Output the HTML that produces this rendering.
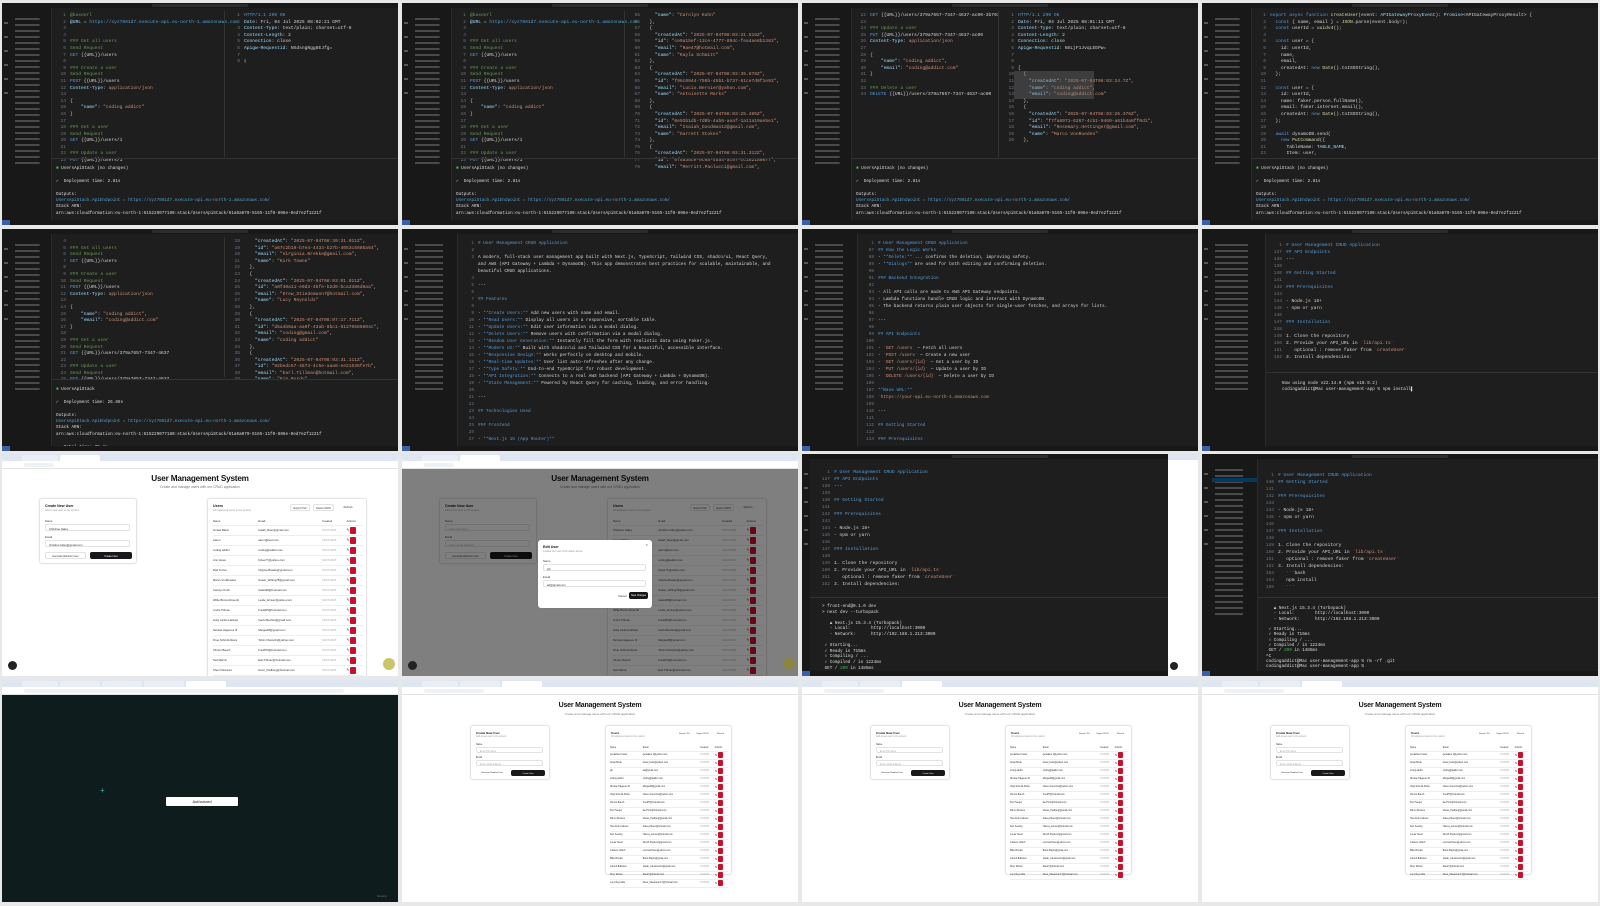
<!DOCTYPE html>
<html><head><meta charset="utf-8">
<style>
*{margin:0;padding:0;box-sizing:border-box}
body{width:1600px;height:906px;background:#e8e8e8;position:relative;overflow:hidden;font-family:"Liberation Sans",sans-serif}
.c{position:absolute;width:396px;height:222px;overflow:hidden;background:#1e1e1e}
.a{position:absolute}
.tb{position:absolute;left:0;top:0;width:396px;height:5px;background:#181818}
.tb:after{content:"";position:absolute;left:150px;top:1px;width:96px;height:3px;background:#2c2c2c;border-radius:1px}
.st{position:absolute;left:0;bottom:0;width:396px;height:5px;background:#181818;border-left:8px solid #3a5fa8}
.act{position:absolute;left:0;top:5px;width:8px;height:212px;background:#181818;background-image:repeating-linear-gradient(180deg,transparent 0 8px,#555 8px 10px,transparent 10px 14px);background-size:4px 80px;background-repeat:no-repeat;background-position:2px 6px}
.sd{position:absolute;left:8px;top:5px;height:212px;background:#181818;border-right:1px solid #2a2a2a;background-image:repeating-linear-gradient(180deg,transparent 0 2px,#4a4a4a 2px 4px,transparent 4px 6px);background-size:60% 150px;background-repeat:no-repeat;background-position:5px 8px}
.code{position:absolute;font-family:"Liberation Mono",monospace;font-size:4.6px;line-height:6.6px;color:#d4d4d4;white-space:pre}
.n{color:#6e7681;display:inline-block;width:12px;text-align:right;margin-right:4px}
.s{color:#ce9178}.k{color:#9cdcfe}.b{color:#569cd6}.g{color:#6a9955}.y{color:#dcdcaa}.gr{color:#3fb950}.u{color:#4fa3d6}
.hr{position:absolute;height:1px;background:#333}
.term{position:absolute;font-family:"Liberation Mono",monospace;font-size:4.3px;line-height:6.4px;color:#ddd;white-space:pre}
.w{background:#fff}
.tabs{position:absolute;left:0;top:0;width:396px;height:7px;background:#dfe6f3}
.tab{position:absolute;top:1px;height:6px;background:#fff;border-radius:2px 2px 0 0}
.addr{position:absolute;left:0;top:7px;width:396px;height:8px;background:#fff;border-bottom:0.5px solid #e3e3e3}
.addr i{position:absolute;left:22px;top:2px;height:4px;background:#eef1f6;border-radius:2px}
.h1{position:absolute;width:396px;text-align:center;font-weight:bold;font-size:8.2px;color:#111;letter-spacing:-0.2px}
.sub{position:absolute;width:396px;text-align:center;font-size:3.4px;color:#777}
.card{position:absolute;background:#fff;border:0.5px solid #e4e4e4;border-radius:3px;box-shadow:0 0 2px rgba(0,0,0,.07);font-size:2.8px;color:#333}
.card .ct{position:absolute;left:5px;top:5px;font-weight:bold;font-size:3.6px;color:#111}
.card .cs{position:absolute;left:5px;top:10px;font-size:2.6px;color:#999}
.lab{position:absolute;left:5px}
.inp{position:absolute;left:5px;right:6px;height:7px;border:0.5px solid #e2e2e2;border-radius:2px;padding:1.6px 3px;font-size:2.8px}
.btn{position:absolute;height:7px;border:0.5px solid #e2e2e2;border-radius:2px;font-size:2.5px;text-align:center;padding-top:2px;white-space:nowrap}
.dk{background:#18181b;color:#fff;border-color:#18181b}
table{position:absolute;border-collapse:collapse;font-size:2.8px;color:#333}
td,th{text-align:left;font-weight:normal;border-bottom:0.5px solid #eee;white-space:nowrap;padding:0}
td.d{color:#aaa}
.ed{display:inline-block;font-size:3.5px;color:#222;margin-right:1px}
.del{display:inline-block;background:#c8102e;border-radius:1px;vertical-align:middle}
</style></head><body>

<!-- ROW 1 -->
<div class="c" style="left:2px;top:3px">
<div class="tb"></div><div class="act"></div><div class="sd" style="width:42px"></div>
<div class="code" style="left:52px;top:10px"><span class="n">1</span><span class="g">@baseUrl</span>
<span class="n">2</span><span class="k">@URL</span> = <span class="u">https://xyz7861d7.execute-api.eu-north-1.amazonaws.com</span>
<span class="n">3</span>
<span class="n">4</span>
<span class="n">5</span><span class="g">### Get all users</span>
<span class="n">6</span><span class="g">Send Request</span>
<span class="n">7</span><span class="b">GET</span> {{URL}}/users
<span class="n">8</span>
<span class="n">9</span><span class="g">### Create a user</span>
<span class="n">10</span><span class="g">Send Request</span>
<span class="n">11</span><span class="b">POST</span> {{URL}}/users
<span class="n">12</span><span class="k">Content-Type</span>: <span class="s">application/json</span>
<span class="n">13</span>
<span class="n">14</span>{
<span class="n">15</span>    <span class="k">"name"</span>: <span class="s">"coding addict"</span>
<span class="n">16</span>}
<span class="n">17</span>
<span class="n">18</span><span class="g">### Get a user</span>
<span class="n">19</span><span class="g">Send Request</span>
<span class="n">20</span><span class="b">GET</span> {{URL}}/users/1
<span class="n">21</span>
<span class="n">22</span><span class="g">### Update a user</span>
<span class="n">23</span><span class="b">PUT</span> {{URL}}/users/1</div>
<div class="hr" style="left:222px;top:8px;width:1px;height:146px"></div>
<div class="code" style="left:226px;top:10px"><span class="n">1</span><span class="b">HTTP/1.1 200 OK</span>
<span class="n">2</span><span class="k">Date</span>: Fri, 04 Jul 2025 08:02:21 GMT
<span class="n">3</span><span class="k">Content-Type</span>: text/plain; charset=utf-8
<span class="n">4</span><span class="k">Content-Length</span>: 2
<span class="n">5</span><span class="k">Connection</span>: close
<span class="n">6</span><span class="k">Apigw-Requestid</span>: NXdsngNgg8EJfg=
<span class="n">7</span>
<span class="n">8</span>▯</div>
<div class="hr" style="left:50px;top:155px;width:346px"></div>
<div class="term" style="left:54px;top:163px"><span class="gr">■</span> UsersApiStack (no changes)

✓  Deployment time: 2.81s

Outputs:
<span class="u">UsersApiStack.ApiEndpoint = https://xyz7861d7.execute-api.eu-north-1.amazonaws.com/</span>
Stack ARN:
arn:aws:cloudformation:eu-north-1:615229077180:stack/UsersApiStack/61a0a070-5165-11f0-806e-0ed7e2f1221f

✓  Total time: 4.30s

codingaddict@Mac users-api % ▯</div>
<div class="st"></div></div>

<div class="c" style="left:402px;top:3px">
<div class="tb"></div><div class="act"></div><div class="sd" style="width:42px"></div>
<div class="code" style="left:52px;top:10px"><span class="n">1</span><span class="g">@baseUrl</span>
<span class="n">2</span><span class="k">@URL</span> = <span class="u">https://xyz7861d7.execute-api.eu-north-1.amazonaws.com</span>
<span class="n">3</span>
<span class="n">4</span>
<span class="n">5</span><span class="g">### Get all users</span>
<span class="n">6</span><span class="g">Send Request</span>
<span class="n">7</span><span class="b">GET</span> {{URL}}/users
<span class="n">8</span>
<span class="n">9</span><span class="g">### Create a user</span>
<span class="n">10</span><span class="g">Send Request</span>
<span class="n">11</span><span class="b">POST</span> {{URL}}/users
<span class="n">12</span><span class="k">Content-Type</span>: <span class="s">application/json</span>
<span class="n">13</span>
<span class="n">14</span>{
<span class="n">15</span>    <span class="k">"name"</span>: <span class="s">"coding addict"</span>
<span class="n">16</span>}
<span class="n">17</span>
<span class="n">18</span><span class="g">### Get a user</span>
<span class="n">19</span><span class="g">Send Request</span>
<span class="n">20</span><span class="b">GET</span> {{URL}}/users/1
<span class="n">21</span>
<span class="n">22</span><span class="g">### Update a user</span>
<span class="n">23</span><span class="b">PUT</span> {{URL}}/users/1</div>
<div class="hr" style="left:222px;top:8px;width:1px;height:146px"></div>
<div class="code" style="left:226px;top:10px"><span class="n">55</span>    <span class="k">"name"</span>: <span class="s">"Carolyn Kuhn"</span>
<span class="n">56</span>  },
<span class="n">57</span>  {
<span class="n">58</span>    <span class="k">"createdAt"</span>: <span class="s">"2025-07-04T08:03:31.516Z"</span>,
<span class="n">59</span>    <span class="k">"id"</span>: <span class="s">"ce9a15ef-13ce-4777-894c-fea4ae8b1383"</span>,
<span class="n">60</span>    <span class="k">"email"</span>: <span class="s">"Rae47@hotmail.com"</span>,
<span class="n">61</span>    <span class="k">"name"</span>: <span class="s">"Kayla Schmitt"</span>
<span class="n">62</span>  },
<span class="n">63</span>  {
<span class="n">64</span>    <span class="k">"createdAt"</span>: <span class="s">"2025-07-04T08:03:35.678Z"</span>,
<span class="n">65</span>    <span class="k">"id"</span>: <span class="s">"f96c0944-705b-45b1-b737-61ce7d0f1e93"</span>,
<span class="n">66</span>    <span class="k">"email"</span>: <span class="s">"Lucio.Bernier@yahoo.com"</span>,
<span class="n">67</span>    <span class="k">"name"</span>: <span class="s">"Antoinette Marks"</span>
<span class="n">68</span>  },
<span class="n">69</span>  {
<span class="n">70</span>    <span class="k">"createdAt"</span>: <span class="s">"2025-07-04T08:03:25.495Z"</span>,
<span class="n">71</span>    <span class="k">"id"</span>: <span class="s">"0e93b1db-7d0b-4ab6-aeaf-1a11a19ae5e1"</span>,
<span class="n">72</span>    <span class="k">"email"</span>: <span class="s">"Isaiah_Goodman12@gmail.com"</span>,
<span class="n">73</span>    <span class="k">"name"</span>: <span class="s">"Garrett Stokes"</span>
<span class="n">74</span>  },
<span class="n">75</span>  {
<span class="n">76</span>    <span class="k">"createdAt"</span>: <span class="s">"2025-07-04T08:03:31.312Z"</span>,
<span class="n">77</span>    <span class="k">"id"</span>: <span class="s">"0f5a35ce-0c0a-45a4-ac97-cc1621a0877"</span>,
<span class="n">78</span>    <span class="k">"email"</span>: <span class="s">"Merritt.Paolucci@gmail.com"</span>,</div>
<div class="hr" style="left:50px;top:155px;width:346px"></div>
<div class="term" style="left:54px;top:163px"><span class="gr">■</span> UsersApiStack (no changes)

✓  Deployment time: 2.81s

Outputs:
<span class="u">UsersApiStack.ApiEndpoint = https://xyz7861d7.execute-api.eu-north-1.amazonaws.com/</span>
Stack ARN:
arn:aws:cloudformation:eu-north-1:615229077180:stack/UsersApiStack/61a0a070-5165-11f0-806e-0ed7e2f1221f

✓  Total time: 4.30s

codingaddict@Mac users-api % ▯</div>
<div class="st"></div></div>

<div class="c" style="left:802px;top:3px">
<div class="tb"></div><div class="act"></div><div class="sd" style="width:42px"></div>
<div class="code" style="left:52px;top:10px"><span class="n">22</span><span class="b">GET</span> {{URL}}/users/379a7657-7347-4637-ac00-3b70393c5c36
<span class="n">23</span>
<span class="n">24</span><span class="g">### Update a user</span>
<span class="n">25</span><span class="b">PUT</span> {{URL}}/users/379a7657-7347-4637-ac00
<span class="n">26</span><span class="k">Content-Type</span>: <span class="s">application/json</span>
<span class="n">27</span>
<span class="n">28</span>{
<span class="n">29</span>    <span class="k">"name"</span>: <span class="s">"coding addict"</span>,
<span class="n">30</span>    <span class="k">"email"</span>: <span class="s">"coding@addict.com"</span>
<span class="n">31</span>}
<span class="n">32</span>
<span class="n">33</span><span class="g">### Delete a user</span>
<span class="n">34</span><span class="b">DELETE</span> {{URL}}/users/379a7657-7347-4637-ac00</div>
<div class="hr" style="left:196px;top:8px;width:1px;height:146px"></div>
<div class="a" style="left:197px;top:8px;width:199px;height:146px;background:#1e1e1e"></div>
<div class="code" style="left:200px;top:10px"><span class="n">1</span><span class="b">HTTP/1.1 200 OK</span>
<span class="n">2</span><span class="k">Date</span>: Fri, 04 Jul 2025 08:01:11 GMT
<span class="n">3</span><span class="k">Content-Type</span>: text/plain; charset=utf-8
<span class="n">4</span><span class="k">Content-Length</span>: 2
<span class="n">5</span><span class="k">Connection</span>: close
<span class="n">6</span><span class="k">Apigw-Requestid</span>: NXLjF1JvqLEEPw=
<span class="n">7</span>
<span class="n">8</span>
<span class="n">9</span>[
<span class="n">10</span>  {
<span class="n">11</span>    <span class="k">"createdAt"</span>: <span class="s">"2025-07-04T08:03:24.7Z"</span>,
<span class="n">12</span>    <span class="k">"name"</span>: <span class="s">"coding addict"</span>,
<span class="n">13</span>    <span class="k">"email"</span>: <span class="s">"coding@addict.com"</span>
<span class="n">14</span>  },
<span class="n">15</span>  {
<span class="n">16</span>    <span class="k">"createdAt"</span>: <span class="s">"2025-07-04T08:03:26.376Z"</span>,
<span class="n">17</span>    <span class="k">"id"</span>: <span class="s">"f7fa8971-6267-4cb1-9469-a61b4a8ff0d1"</span>,
<span class="n">18</span>    <span class="k">"email"</span>: <span class="s">"Rosemary.Hettinger@gmail.com"</span>,
<span class="n">19</span>    <span class="k">"name"</span>: <span class="s">"Marco VonRueden"</span>
<span class="n">20</span>  },</div>
<div class="a" style="left:212px;top:68px;width:80px;height:28px;background:rgba(120,120,120,.35)"></div>
<div class="hr" style="left:50px;top:155px;width:346px"></div>
<div class="term" style="left:54px;top:163px"><span class="gr">■</span> UsersApiStack (no changes)

✓  Deployment time: 2.81s

Outputs:
<span class="u">UsersApiStack.ApiEndpoint = https://xyz7861d7.execute-api.eu-north-1.amazonaws.com/</span>
Stack ARN:
arn:aws:cloudformation:eu-north-1:615229077180:stack/UsersApiStack/61a0a070-5165-11f0-806e-0ed7e2f1221f

✓  Total time: 4.30s

codingaddict@Mac users-api % ▯</div>
<div class="st"></div></div>

<div class="c" style="left:1202px;top:3px">
<div class="tb"></div><div class="act"></div><div class="sd" style="width:42px"></div>
<div class="code" style="left:52px;top:10px"><span class="n">1</span><span class="b">export async function</span> <span class="y">createUser</span>(event: <span class="k">APIGatewayProxyEvent</span>): <span class="k">Promise</span>&lt;APIGatewayProxyResult&gt; {
<span class="n">2</span>  <span class="b">const</span> { name, email } = <span class="y">JSON</span>.parse(event.body!);
<span class="n">3</span>  <span class="b">const</span> userId = <span class="y">uuidv4</span>();
<span class="n">4</span>
<span class="n">5</span>  <span class="b">const</span> user = {
<span class="n">6</span>    id: userId,
<span class="n">7</span>    name,
<span class="n">8</span>    email,
<span class="n">9</span>    createdAt: <span class="b">new</span> <span class="y">Date</span>().toISOString(),
<span class="n">10</span>  };
<span class="n">11</span>
<span class="n">12</span>  <span class="b">const</span> user = {
<span class="n">13</span>    id: userId,
<span class="n">14</span>    name: faker.person.fullName(),
<span class="n">15</span>    email: faker.internet.email(),
<span class="n">16</span>    createdAt: <span class="b">new</span> <span class="y">Date</span>().toISOString(),
<span class="n">17</span>  };
<span class="n">18</span>
<span class="n">19</span>  <span class="b">await</span> dynamoDB.send(
<span class="n">20</span>    <span class="b">new</span> <span class="y">PutCommand</span>({
<span class="n">21</span>      TableName: <span class="k">TABLE_NAME</span>,
<span class="n">22</span>      Item: user,</div>
<div class="hr" style="left:50px;top:155px;width:346px"></div>
<div class="term" style="left:54px;top:163px"><span class="gr">■</span> UsersApiStack (no changes)

✓  Deployment time: 2.81s

Outputs:
<span class="u">UsersApiStack.ApiEndpoint = https://xyz7861d7.execute-api.eu-north-1.amazonaws.com/</span>
Stack ARN:
arn:aws:cloudformation:eu-north-1:615229077180:stack/UsersApiStack/61a0a070-5165-11f0-806e-0ed7e2f1221f

✓  Total time: 4.30s

codingaddict@Mac users-api % ▯</div>
<div class="st"></div></div>

<!-- ROW 2 -->
<div class="c" style="left:2px;top:229px">
<div class="tb"></div><div class="act"></div><div class="sd" style="width:42px"></div>
<div class="code" style="left:52px;top:10px"><span class="n">4</span>
<span class="n">5</span><span class="g">### Get all users</span>
<span class="n">6</span><span class="g">Send Request</span>
<span class="n">7</span><span class="b">GET</span> {{URL}}/users
<span class="n">8</span>
<span class="n">9</span><span class="g">### Create a user</span>
<span class="n">10</span><span class="g">Send Request</span>
<span class="n">11</span><span class="b">POST</span> {{URL}}/users
<span class="n">12</span><span class="k">Content-Type</span>: <span class="s">application/json</span>
<span class="n">13</span>
<span class="n">14</span>{
<span class="n">15</span>    <span class="k">"name"</span>: <span class="s">"coding addict"</span>,
<span class="n">16</span>    <span class="k">"email"</span>: <span class="s">"coding@addict.com"</span>
<span class="n">17</span>}
<span class="n">18</span>
<span class="n">19</span><span class="g">### Get a user</span>
<span class="n">20</span><span class="g">Send Request</span>
<span class="n">21</span><span class="b">GET</span> {{URL}}/users/379a7657-7347-4637
<span class="n">22</span>
<span class="n">23</span><span class="g">### Update a user</span>
<span class="n">24</span><span class="g">Send Request</span>
<span class="n">25</span><span class="b">PUT</span> {{URL}}/users/379a7657-7347-4637
<span class="n">26</span><span class="k">Content-Type</span>: <span class="s">application/json</span></div>
<div class="a" style="left:223px;top:8px;width:173px;height:142px;background:#1e1e1e"></div>
<div class="hr" style="left:222px;top:8px;width:1px;height:140px"></div>
<div class="code" style="left:226px;top:10px"><span class="n">18</span>    <span class="k">"createdAt"</span>: <span class="s">"2025-07-04T08:30:31.011Z"</span>,
<span class="n">19</span>    <span class="k">"id"</span>: <span class="s">"a67c2b19-b7e4-4433-b27b-4053c5986a64"</span>,
<span class="n">20</span>    <span class="k">"email"</span>: <span class="s">"Virginia.Brekke@gmail.com"</span>,
<span class="n">21</span>    <span class="k">"name"</span>: <span class="s">"Kirk Towne"</span>
<span class="n">22</span>  },
<span class="n">23</span>  {
<span class="n">24</span>    <span class="k">"createdAt"</span>: <span class="s">"2025-07-04T08:03:01.011Z"</span>,
<span class="n">25</span>    <span class="k">"id"</span>: <span class="s">"a0f40a11-e0d3-4bfe-b2d0-bca3386d8aa"</span>,
<span class="n">26</span>    <span class="k">"email"</span>: <span class="s">"Drew_Stiedemann7@hotmail.com"</span>,
<span class="n">27</span>    <span class="k">"name"</span>: <span class="s">"Lucy Reynolds"</span>
<span class="n">28</span>  },
<span class="n">29</span>  {
<span class="n">30</span>    <span class="k">"createdAt"</span>: <span class="s">"2025-07-04T08:07:17.711Z"</span>,
<span class="n">31</span>    <span class="k">"id"</span>: <span class="s">"d5a4b6aa-aa0f-43ab-8bc1-61270585604c"</span>,
<span class="n">32</span>    <span class="k">"email"</span>: <span class="s">"coding@gmail.com"</span>,
<span class="n">33</span>    <span class="k">"name"</span>: <span class="s">"coding addict"</span>
<span class="n">34</span>  },
<span class="n">35</span>  {
<span class="n">36</span>    <span class="k">"createdAt"</span>: <span class="s">"2025-07-04T08:03:31.111Z"</span>,
<span class="n">37</span>    <span class="k">"id"</span>: <span class="s">"92bedc57-4873-4c5e-aaa6-ee21536fe7b"</span>,
<span class="n">38</span>    <span class="k">"email"</span>: <span class="s">"Earl.Tillman@hotmail.com"</span>,
<span class="n">39</span>    <span class="k">"name"</span>: <span class="s">"Kip Purdy"</span>
<span class="n">40</span>  },
<span class="n">41</span>  {</div>
<div class="a" style="left:50px;top:150px;width:346px;height:67px;background:#1e1e1e"></div>
<div class="hr" style="left:50px;top:150px;width:346px"></div>
<div class="term" style="left:54px;top:158px"><span class="gr">■</span> UsersApiStack

✓  Deployment time: 26.86s

Outputs:
<span class="u">UsersApiStack.ApiEndpoint = https://xyz7861d7.execute-api.eu-north-1.amazonaws.com/</span>
Stack ARN:
arn:aws:cloudformation:eu-north-1:615229077180:stack/UsersApiStack/61a0a070-5165-11f0-806e-0ed7e2f1221f

✓  Total time: 35.4s

codingaddict@Mac users-api % ▯</div>
<div class="st"></div></div>

<div class="c" style="left:402px;top:229px">
<div class="tb"></div><div class="act"></div><div class="sd" style="width:48px"></div>
<div class="code" style="left:60px;top:11px;line-height:7px;font-size:4.4px"><span class="n">1</span><span class="b"># User Management CRUD Application</span>
<span class="n">2</span>
<span class="n">3</span>A modern, full-stack user management app built with Next.js, TypeScript, Tailwind CSS, shadcn/ui, React Query,
<span class="n"></span>and AWS (API Gateway + Lambda + DynamoDB). This app demonstrates best practices for scalable, maintainable, and
<span class="n"></span>beautiful CRUD applications.
<span class="n">4</span>
<span class="n">5</span>---
<span class="n">6</span>
<span class="n">7</span><span class="b">## Features</span>
<span class="n">8</span>
<span class="n">9</span>- <span class="b">**Create Users:**</span> Add new users with name and email.
<span class="n">10</span>- <span class="b">**Read Users:**</span> Display all users in a responsive, sortable table.
<span class="n">11</span>- <span class="b">**Update Users:**</span> Edit user information via a modal dialog.
<span class="n">12</span>- <span class="b">**Delete Users:**</span> Remove users with confirmation via a modal dialog.
<span class="n">13</span>- <span class="b">**Random User Generation:**</span> Instantly fill the form with realistic data using Faker.js.
<span class="n">14</span>- <span class="b">**Modern UI:**</span> Built with shadcn/ui and Tailwind CSS for a beautiful, accessible interface.
<span class="n">15</span>- <span class="b">**Responsive Design:**</span> Works perfectly on desktop and mobile.
<span class="n">16</span>- <span class="b">**Real-time Updates:**</span> User list auto-refreshes after any change.
<span class="n">17</span>- <span class="b">**Type Safety:**</span> End-to-end TypeScript for robust development.
<span class="n">18</span>- <span class="b">**API Integration:**</span> Connects to a real AWS backend (API Gateway + Lambda + DynamoDB).
<span class="n">19</span>- <span class="b">**State Management:**</span> Powered by React Query for caching, loading, and error handling.
<span class="n">20</span>
<span class="n">21</span>---
<span class="n">22</span>
<span class="n">23</span><span class="b">## Technologies Used</span>
<span class="n">24</span>
<span class="n">25</span><span class="b">### Frontend</span>
<span class="n">26</span>
<span class="n">27</span>- <span class="b">**Next.js 15 (App Router)**</span></div>
<div class="st"></div></div>

<div class="c" style="left:802px;top:229px">
<div class="tb"></div><div class="act"></div><div class="sd" style="width:48px"></div>
<div class="code" style="left:60px;top:11px;line-height:7px;font-size:4.4px"><span class="n">1</span><span class="b"># User Management CRUD Application</span>
<span class="n">87</span><span class="b">## How the Logic Works</span>
<span class="n">88</span>- <span class="b">**Delete:**</span> ... confirms the deletion, improving safety.
<span class="n">89</span>- <span class="b">**Dialogs**</span> are used for both editing and confirming deletion.
<span class="n">90</span>
<span class="n">91</span><span class="b">### Backend Integration</span>
<span class="n">92</span>
<span class="n">93</span>- All API calls are made to AWS API Gateway endpoints.
<span class="n">94</span>- Lambda functions handle CRUD logic and interact with DynamoDB.
<span class="n">95</span>- The backend returns plain user objects for single-user fetches, and arrays for lists.
<span class="n">96</span>
<span class="n">97</span>---
<span class="n">98</span>
<span class="n">99</span><span class="b">## API Endpoints</span>
<span class="n">100</span>
<span class="n">101</span>- <span class="s">&#96;GET /users&#96;</span> — Fetch all users
<span class="n">102</span>- <span class="s">&#96;POST /users&#96;</span> — Create a new user
<span class="n">103</span>- <span class="s">&#96;GET /users/{id}&#96;</span> — Get a user by ID
<span class="n">104</span>- <span class="s">&#96;PUT /users/{id}&#96;</span> — Update a user by ID
<span class="n">105</span>- <span class="s">&#96;DELETE /users/{id}&#96;</span> — Delete a user by ID
<span class="n">106</span>
<span class="n">107</span><span class="b">**Base URL:**</span>
<span class="n">108</span><span class="s">&#96;https://your-api.eu-north-1.amazonaws.com&#96;</span>
<span class="n">109</span>
<span class="n">110</span>---
<span class="n">111</span>
<span class="n">112</span><span class="b">## Getting Started</span>
<span class="n">113</span>
<span class="n">114</span><span class="b">### Prerequisites</span></div>
<div class="st"></div></div>

<div class="c" style="left:1202px;top:229px">
<div class="tb"></div><div class="act"></div><div class="sd" style="width:56px"></div>
<div class="code" style="left:68px;top:13px;line-height:7px;font-size:4.6px"><span class="n">1</span><span class="b"># User Management CRUD Application</span>
<span class="n">137</span><span class="b">## API Endpoints</span>
<span class="n">138</span>---
<span class="n">139</span>
<span class="n">140</span><span class="b">## Getting Started</span>
<span class="n">141</span>
<span class="n">142</span><span class="b">### Prerequisites</span>
<span class="n">143</span>
<span class="n">144</span>- Node.js 18+
<span class="n">145</span>- npm or yarn
<span class="n">146</span>
<span class="n">147</span><span class="b">### Installation</span>
<span class="n">148</span>
<span class="n">149</span>1. Clone the repository
<span class="n">150</span>2. Provide your API_URL in <span class="s">&#96;lib/api.ts&#96;</span>
<span class="n">151</span>   optional : remove faker from <span class="s">&#96;createUser&#96;</span>
<span class="n">152</span>3. Install dependencies:</div>
<div class="hr" style="left:64px;top:143px;width:332px"></div>
<div class="term" style="left:80px;top:152px">Now using node v22.14.0 (npm v10.9.2)
codingaddict@Mac user-management-app % npm install▌</div>
<div class="st"></div></div>

<!-- ROW 3 -->
<div class="c w" style="left:2px;top:454px">
<div class="tabs"><div class="tab" style="left:20px;width:36px;background:#e9eef7"></div><div class="tab" style="left:58px;width:40px"></div></div>
<div class="addr"><i style="width:30px"></i></div>
<div class="h1" style="top:20px">User Management System</div>
<div class="sub" style="top:31px">Create and manage users with our CRUD application</div>
<div class="card" style="left:37px;top:44px;width:98px;height:66px"><div class="ct">Create New User</div><div class="cs">Add a new user to the system</div>
<div class="lab" style="top:20px">Name</div><div class="inp" style="top:25px">Christine Haley</div>
<div class="lab" style="top:36px">Email</div><div class="inp" style="top:41px">christine.haley@gmail.com</div>
<div class="btn" style="left:5px;top:53px;width:41px">Generate Random User</div><div class="btn dk" style="left:50px;top:53px;width:42px">Create User</div></div>
<div class="card" style="left:205px;top:44px;width:160px;height:190px"><div class="ct">Users</div><div class="cs">All registered users in the system</div>
<div class="btn" style="left:82px;top:5px;width:20px">Export CSV</div><div class="btn" style="left:105px;top:5px;width:21px">Export JSON</div><div class="btn" style="left:129px;top:5px;width:22px;border:none">Refresh</div>
<table style="left:5px;top:19px;width:150px"><tr style="height:7px"><th>Name</th><th>Email</th><th>Created</th><th>Actions</th></tr>
<tr style="height:10px"><td>Ismael Blanc</td><td>Isaiah_Beer@gmail.com</td><td class="d">04/07/2025</td><td><span class="ed">✎</span><span class="del" style="width:5.5px;height:7px"></span></td></tr>
<tr style="height:10px"><td>Aaron</td><td>aaron@test.com</td><td class="d">04/07/2025</td><td><span class="ed">✎</span><span class="del" style="width:5.5px;height:7px"></span></td></tr>
<tr style="height:10px"><td>coding addict</td><td>coding@addict.com</td><td class="d">04/07/2025</td><td><span class="ed">✎</span><span class="del" style="width:5.5px;height:7px"></span></td></tr>
<tr style="height:10px"><td>Ann Howe</td><td>Kylee77@yahoo.com</td><td class="d">04/07/2025</td><td><span class="ed">✎</span><span class="del" style="width:5.5px;height:7px"></span></td></tr>
<tr style="height:10px"><td>Rafi Turner</td><td>Virginie.Brekke@gmail.com</td><td class="d">04/07/2025</td><td><span class="ed">✎</span><span class="del" style="width:5.5px;height:7px"></span></td></tr>
<tr style="height:10px"><td>Marco VonRueden</td><td>Susan_Witting78@gmail.com</td><td class="d">04/07/2025</td><td><span class="ed">✎</span><span class="del" style="width:5.5px;height:7px"></span></td></tr>
<tr style="height:10px"><td>Carolyn Kuhn</td><td>Isabel38@hotmail.com</td><td class="d">04/07/2025</td><td><span class="ed">✎</span><span class="del" style="width:5.5px;height:7px"></span></td></tr>
<tr style="height:10px"><td>Willie Brown-Rosenb</td><td>Leslie_Ernser@yahoo.com</td><td class="d">04/07/2025</td><td><span class="ed">✎</span><span class="del" style="width:5.5px;height:7px"></span></td></tr>
<tr style="height:10px"><td>Curtis Tillman</td><td>Freda55@hotmail.com</td><td class="d">04/07/2025</td><td><span class="ed">✎</span><span class="del" style="width:5.5px;height:7px"></span></td></tr>
<tr style="height:10px"><td>Holly Larkin-Hackett</td><td>Gavin.Bechtel@gmail.com</td><td class="d">04/07/2025</td><td><span class="ed">✎</span><span class="del" style="width:5.5px;height:7px"></span></td></tr>
<tr style="height:10px"><td>Nicolas Hagenes III</td><td>Margie28@gmail.com</td><td class="d">04/07/2025</td><td><span class="ed">✎</span><span class="del" style="width:5.5px;height:7px"></span></td></tr>
<tr style="height:10px"><td>Drue Schmitt-Davis</td><td>Tobin.Champlin@yahoo.com</td><td class="d">04/07/2025</td><td><span class="ed">✎</span><span class="del" style="width:5.5px;height:7px"></span></td></tr>
<tr style="height:10px"><td>Clinton Bauch</td><td>Fred870@hotmail.com</td><td class="d">04/07/2025</td><td><span class="ed">✎</span><span class="del" style="width:5.5px;height:7px"></span></td></tr>
<tr style="height:10px"><td>Neil Marvin</td><td>Earl.Tillman@hotmail.com</td><td class="d">04/07/2025</td><td><span class="ed">✎</span><span class="del" style="width:5.5px;height:7px"></span></td></tr>
<tr style="height:10px"><td>Sherri McLaren</td><td>Henri_Padberg@hotmail.com</td><td class="d">04/07/2025</td><td><span class="ed">✎</span><span class="del" style="width:5.5px;height:7px"></span></td></tr>
</table></div>
<div class="a" style="left:6px;top:207px;width:9px;height:9px;background:#222;border-radius:50%"></div>
<div class="a" style="left:381px;top:204px;width:12px;height:12px;background:#c9c56a;border-radius:50%"></div>
</div>

<div class="c w" style="left:402px;top:454px">
<div class="tabs"><div class="tab" style="left:20px;width:36px;background:#e9eef7"></div><div class="tab" style="left:58px;width:40px"></div></div>
<div class="addr"><i style="width:30px"></i></div>
<div class="h1" style="top:20px">User Management System</div>
<div class="sub" style="top:31px">Create and manage users with our CRUD application</div>
<div class="card" style="left:37px;top:44px;width:98px;height:66px"><div class="ct">Create New User</div><div class="cs">Add a new user to the system</div>
<div class="lab" style="top:20px">Name</div><div class="inp" style="top:25px;color:#aaa">Enter full name</div>
<div class="lab" style="top:36px">Email</div><div class="inp" style="top:41px;color:#aaa">Enter email address</div>
<div class="btn" style="left:5px;top:53px;width:41px">Generate Random User</div><div class="btn dk" style="left:50px;top:53px;width:42px">Create User</div></div>
<div class="card" style="left:205px;top:44px;width:160px;height:190px"><div class="ct">Users</div><div class="cs">All registered users in the system</div>
<div class="btn" style="left:82px;top:5px;width:20px">Export CSV</div><div class="btn" style="left:105px;top:5px;width:21px">Export JSON</div><div class="btn" style="left:129px;top:5px;width:22px;border:none">Refresh</div>
<table style="left:5px;top:19px;width:150px"><tr style="height:7px"><th>Name</th><th>Email</th><th>Created</th><th>Actions</th></tr>
<tr style="height:10px"><td>Christine Haley</td><td>christine.haley@yahoo.com</td><td class="d">04/07/2025</td><td><span class="ed">✎</span><span class="del" style="width:5.5px;height:7px"></span></td></tr>
<tr style="height:10px"><td>Ismael Blanc</td><td>Isaiah_Beer@gmail.com</td><td class="d">04/07/2025</td><td><span class="ed">✎</span><span class="del" style="width:5.5px;height:7px"></span></td></tr>
<tr style="height:10px"><td>Aaron</td><td>aaron@test.com</td><td class="d">04/07/2025</td><td><span class="ed">✎</span><span class="del" style="width:5.5px;height:7px"></span></td></tr>
<tr style="height:10px"><td>coding addict</td><td>coding@addict.com</td><td class="d">04/07/2025</td><td><span class="ed">✎</span><span class="del" style="width:5.5px;height:7px"></span></td></tr>
<tr style="height:10px"><td>Ann Howe</td><td>Kylee77@yahoo.com</td><td class="d">04/07/2025</td><td><span class="ed">✎</span><span class="del" style="width:5.5px;height:7px"></span></td></tr>
<tr style="height:10px"><td>Rafi Turner</td><td>Virginie.Brekke@gmail.com</td><td class="d">04/07/2025</td><td><span class="ed">✎</span><span class="del" style="width:5.5px;height:7px"></span></td></tr>
<tr style="height:10px"><td>Marco VonRueden</td><td>Susan_Witting78@gmail.com</td><td class="d">04/07/2025</td><td><span class="ed">✎</span><span class="del" style="width:5.5px;height:7px"></span></td></tr>
<tr style="height:10px"><td>Carolyn Kuhn</td><td>Isabel38@hotmail.com</td><td class="d">04/07/2025</td><td><span class="ed">✎</span><span class="del" style="width:5.5px;height:7px"></span></td></tr>
<tr style="height:10px"><td>Willie Brown-Rosenb</td><td>Leslie_Ernser@yahoo.com</td><td class="d">04/07/2025</td><td><span class="ed">✎</span><span class="del" style="width:5.5px;height:7px"></span></td></tr>
<tr style="height:10px"><td>Curtis Tillman</td><td>Freda55@hotmail.com</td><td class="d">04/07/2025</td><td><span class="ed">✎</span><span class="del" style="width:5.5px;height:7px"></span></td></tr>
<tr style="height:10px"><td>Holly Larkin-Hackett</td><td>Gavin.Bechtel@gmail.com</td><td class="d">04/07/2025</td><td><span class="ed">✎</span><span class="del" style="width:5.5px;height:7px"></span></td></tr>
<tr style="height:10px"><td>Nicolas Hagenes III</td><td>Margie28@gmail.com</td><td class="d">04/07/2025</td><td><span class="ed">✎</span><span class="del" style="width:5.5px;height:7px"></span></td></tr>
<tr style="height:10px"><td>Drue Schmitt-Davis</td><td>Tobin.Champlin@yahoo.com</td><td class="d">04/07/2025</td><td><span class="ed">✎</span><span class="del" style="width:5.5px;height:7px"></span></td></tr>
<tr style="height:10px"><td>Clinton Bauch</td><td>Fred870@hotmail.com</td><td class="d">04/07/2025</td><td><span class="ed">✎</span><span class="del" style="width:5.5px;height:7px"></span></td></tr>
<tr style="height:10px"><td>Neil Marvin</td><td>Earl.Tillman@hotmail.com</td><td class="d">04/07/2025</td><td><span class="ed">✎</span><span class="del" style="width:5.5px;height:7px"></span></td></tr>
</table></div>
<div class="a" style="left:0;top:15px;width:396px;height:207px;background:rgba(0,0,0,.5)"></div>
<div class="card" style="left:136px;top:86px;width:114px;height:68px;border:none"><div class="ct">Edit User</div><div class="cs">Update the user information below</div>
<div class="lab" style="top:19px">Name</div><div class="inp" style="top:24px">jsh</div>
<div class="lab" style="top:35px">Email</div><div class="inp" style="top:40px">ad@gmail.com</div>
<div class="a" style="left:80px;top:54px;font-size:2.8px">Cancel</div><div class="btn dk" style="left:91px;top:52px;width:19px;font-size:2.3px">Save Changes</div>
<div class="a" style="right:4px;top:3px;font-size:3px;color:#666">✕</div></div>
<div class="a" style="left:6px;top:207px;width:9px;height:9px;background:#222;border-radius:50%"></div>
<div class="a" style="left:381px;top:204px;width:12px;height:12px;background:#8a8640;border-radius:50%"></div>
</div>

<div class="c" style="left:802px;top:454px">
<div class="tb"></div><div class="act"></div>
<div class="a" style="left:366px;top:0;width:30px;height:222px;background:#fff"></div><div class="a" style="left:366px;top:0;width:30px;height:6px;background:#dfe6f3"></div>
<div class="a" style="left:368px;top:208px;width:8px;height:8px;background:#222;border-radius:50%"></div>
<div class="code" style="left:16px;top:15px;line-height:7px;font-size:4.6px"><span class="n">1</span><span class="b"># User Management CRUD Application</span>
<span class="n">137</span><span class="b">## API Endpoints</span>
<span class="n">138</span>---
<span class="n">139</span>
<span class="n">140</span><span class="b">## Getting Started</span>
<span class="n">141</span>
<span class="n">142</span><span class="b">### Prerequisites</span>
<span class="n">143</span>
<span class="n">144</span>- Node.js 18+
<span class="n">145</span>- npm or yarn
<span class="n">146</span>
<span class="n">147</span><span class="b">### Installation</span>
<span class="n">148</span>
<span class="n">149</span>1. Clone the repository
<span class="n">150</span>2. Provide your API_URL in <span class="s">&#96;lib/api.ts&#96;</span>
<span class="n">151</span>   optional : remove faker from <span class="s">&#96;createUser&#96;</span>
<span class="n">152</span>3. Install dependencies:</div>
<div class="a" style="left:8px;top:143px;width:358px;height:74px;background:#1e1e1e"></div>
<div class="hr" style="left:8px;top:143px;width:358px"></div>
<div class="term" style="left:20px;top:150px;line-height:5.6px">&gt; front-end@0.1.0 dev
&gt; next dev --turbopack

   ▲ Next.js 15.3.4 (Turbopack)
   - Local:        http://localhost:3000
   - Network:      http://192.168.1.213:3000

 ✓ Starting...
 ✓ Ready in 715ms
 ○ Compiling / ...
 ✓ Compiled / in 1224ms
 GET / <span class="gr">200</span> in 1485ms</div>
<div class="st" style="width:366px"></div></div>

<div class="c" style="left:1202px;top:454px">
<div class="tb"></div><div class="act"></div><div class="sd" style="width:48px"></div>
<div class="a" style="left:10px;top:24px;width:45px;height:4px;background:#04395e"></div>
<div class="code" style="left:60px;top:18px;line-height:7px;font-size:4.6px"><span class="n">1</span><span class="b"># User Management CRUD Application</span>
<span class="n">140</span><span class="b">## Getting Started</span>
<span class="n">141</span>
<span class="n">142</span><span class="b">### Prerequisites</span>
<span class="n">143</span>
<span class="n">144</span>- Node.js 18+
<span class="n">145</span>- npm or yarn
<span class="n">146</span>
<span class="n">147</span><span class="b">### Installation</span>
<span class="n">148</span>
<span class="n">149</span>1. Clone the repository
<span class="n">150</span>2. Provide your API_URL in <span class="s">&#96;lib/api.ts&#96;</span>
<span class="n">151</span>   optional : remove faker from <span class="s">&#96;createUser&#96;</span>
<span class="n">152</span>3. Install dependencies:
<span class="n">153</span>   &#96;&#96;&#96;bash
<span class="n">154</span>   npm install
<span class="n">155</span>   &#96;&#96;&#96;</div>
<div class="a" style="left:56px;top:143px;width:340px;height:74px;background:#1e1e1e"></div>
<div class="hr" style="left:56px;top:143px;width:340px"></div>
<div class="term" style="left:64px;top:152px;line-height:5.3px">   ▲ Next.js 15.3.4 (Turbopack)
   - Local:        http://localhost:3000
   - Network:      http://192.168.1.213:3000

 ✓ Starting...
 ✓ Ready in 715ms
 ○ Compiling / ...
 ✓ Compiled / in 1224ms
 GET / <span class="gr">200</span> in 1485ms
^C
codingaddict@Mac user-management-app % rm -rf .git
codingaddict@Mac user-management-app %</div>
<div class="st"></div></div>

<!-- ROW 4 -->
<div class="c" style="left:2px;top:680px;background:#0f1c1e">
<div class="tabs"><div class="tab" style="left:20px;width:36px;background:#e9eef7"></div><div class="tab" style="left:58px;width:40px;background:#e9eef7"></div><div class="tab" style="left:100px;width:40px;background:#e9eef7"></div><div class="tab" style="left:142px;width:40px;background:#e9eef7"></div><div class="tab" style="left:184px;width:40px"></div></div>
<div class="addr"><i style="width:320px"></i></div>
<div class="a" style="left:98px;top:106px;font-size:8px;color:#3fb9a0">+</div>
<div class="a" style="left:164px;top:117px;width:72px;height:9px;background:#fff;border-radius:1px;font-size:4px;text-align:center;padding-top:2.4px;color:#111">Authorized</div>
<div class="a" style="left:375px;top:214px;font-size:3px;color:#777">Granny</div>
</div>

<div class="c w" style="left:402px;top:680px">
<div class="tabs"><div class="tab" style="left:20px;width:36px;background:#e9eef7"></div><div class="tab" style="left:58px;width:40px;background:#e9eef7"></div><div class="tab" style="left:100px;width:40px"></div></div>
<div class="addr"><i style="width:60px"></i></div>
<div class="h1" style="top:22px;font-size:7px">User Management System</div>
<div class="sub" style="top:32px;font-size:3px">Create and manage users with our CRUD application</div>
<div class="card" style="left:68px;top:45px;width:80px;height:55px"><div class="ct" style="font-size:3px">Create New User</div><div class="cs" style="font-size:2.3px">Add a new user to the system</div>
<div class="lab" style="top:17px;font-size:2.4px">Name</div><div class="inp" style="top:21px;height:6px;color:#aaa;font-size:2.4px">Enter full name</div>
<div class="lab" style="top:30px;font-size:2.4px">Email</div><div class="inp" style="top:34px;height:6px;color:#aaa;font-size:2.4px">Enter email address</div>
<div class="btn" style="left:5px;top:44px;width:32px;height:6px;font-size:2.1px;border:none">Generate Random User</div><div class="btn dk" style="left:40px;top:44px;width:34px;height:6px;font-size:2.1px">Create User</div></div>
<div class="card" style="left:203px;top:45px;width:127px;height:150px"><div class="ct" style="font-size:3px">Users</div><div class="cs" style="font-size:2.3px">All registered users in the system</div>
<div class="btn" style="left:71px;top:5px;width:15px;height:6px;font-size:2px;border:none">Export CSV</div><div class="btn" style="left:88px;top:5px;width:17px;height:6px;font-size:2px;border:none">Export JSON</div><div class="btn" style="left:107px;top:5px;width:15px;height:6px;font-size:2px;border:none">Refresh</div>
<table style="left:4px;top:19px;width:118px;font-size:2.3px"><tr style="height:6px"><th>Name</th><th>Email</th><th>Created</th><th>Actions</th></tr>
<tr style="height:8px"><td>Geraldine Kunde</td><td>geraldine.k@yahoo.com</td><td class="d">7/4/2025</td><td><span class="ed" style="font-size:3px">✎</span><span class="del" style="width:4.5px;height:5.5px"></span></td></tr>
<tr style="height:8px"><td>Israel Bode</td><td>israel_bode@yahoo.com</td><td class="d">7/4/2025</td><td><span class="ed" style="font-size:3px">✎</span><span class="del" style="width:4.5px;height:5.5px"></span></td></tr>
<tr style="height:8px"><td>jsh</td><td>ad@gmail.com</td><td class="d">7/4/2025</td><td><span class="ed" style="font-size:3px">✎</span><span class="del" style="width:4.5px;height:5.5px"></span></td></tr>
<tr style="height:8px"><td>coding addict</td><td>coding@addict.com</td><td class="d">7/4/2025</td><td><span class="ed" style="font-size:3px">✎</span><span class="del" style="width:4.5px;height:5.5px"></span></td></tr>
<tr style="height:8px"><td>Nicolas Hagenes III</td><td>Margie28@gmail.com</td><td class="d">7/4/2025</td><td><span class="ed" style="font-size:3px">✎</span><span class="del" style="width:4.5px;height:5.5px"></span></td></tr>
<tr style="height:8px"><td>Olga Schmitt-Davis</td><td>Owen.Greenholt@yahoo.com</td><td class="d">7/4/2025</td><td><span class="ed" style="font-size:3px">✎</span><span class="del" style="width:4.5px;height:5.5px"></span></td></tr>
<tr style="height:8px"><td>Clinton Bauch</td><td>Fred87@hotmail.com</td><td class="d">7/4/2025</td><td><span class="ed" style="font-size:3px">✎</span><span class="del" style="width:4.5px;height:5.5px"></span></td></tr>
<tr style="height:8px"><td>Kim Hoeger</td><td>Ike.Hintz@hotmail.com</td><td class="d">7/4/2025</td><td><span class="ed" style="font-size:3px">✎</span><span class="del" style="width:4.5px;height:5.5px"></span></td></tr>
<tr style="height:8px"><td>Marco Dickens</td><td>Cletus_Padberg@gmail.com</td><td class="d">7/4/2025</td><td><span class="ed" style="font-size:3px">✎</span><span class="del" style="width:4.5px;height:5.5px"></span></td></tr>
<tr style="height:8px"><td>Tara Kuhn-Gibson</td><td>Stacey.Moen@hotmail.com</td><td class="d">7/4/2025</td><td><span class="ed" style="font-size:3px">✎</span><span class="del" style="width:4.5px;height:5.5px"></span></td></tr>
<tr style="height:8px"><td>Kari Keeling</td><td>Harvey_Ernser@hotmail.com</td><td class="d">7/4/2025</td><td><span class="ed" style="font-size:3px">✎</span><span class="del" style="width:4.5px;height:5.5px"></span></td></tr>
<tr style="height:8px"><td>Lucas Huels</td><td>Merritt.Paolucci@gmail.com</td><td class="d">7/4/2025</td><td><span class="ed" style="font-size:3px">✎</span><span class="del" style="width:4.5px;height:5.5px"></span></td></tr>
<tr style="height:8px"><td>Julianne Welch</td><td>Lucinda.Hane@yahoo.com</td><td class="d">7/4/2025</td><td><span class="ed" style="font-size:3px">✎</span><span class="del" style="width:4.5px;height:5.5px"></span></td></tr>
<tr style="height:8px"><td>Billie Brooks</td><td>Brain.Rippin@gmail.com</td><td class="d">7/4/2025</td><td><span class="ed" style="font-size:3px">✎</span><span class="del" style="width:4.5px;height:5.5px"></span></td></tr>
<tr style="height:8px"><td>Garrett Balistreri</td><td>Isaiah_Goodman12@gmail.com</td><td class="d">7/4/2025</td><td><span class="ed" style="font-size:3px">✎</span><span class="del" style="width:4.5px;height:5.5px"></span></td></tr>
<tr style="height:8px"><td>Roxy Rohan</td><td>Rae47@hotmail.com</td><td class="d">7/4/2025</td><td><span class="ed" style="font-size:3px">✎</span><span class="del" style="width:4.5px;height:5.5px"></span></td></tr>
<tr style="height:8px"><td>Lucy Reynolds</td><td>Drew_Stiedemann7@hotmail.com</td><td class="d">7/4/2025</td><td><span class="ed" style="font-size:3px">✎</span><span class="del" style="width:4.5px;height:5.5px"></span></td></tr>
</table></div>
</div>

<div class="c w" style="left:802px;top:680px">
<div class="tabs"><div class="tab" style="left:20px;width:36px;background:#e9eef7"></div><div class="tab" style="left:58px;width:40px;background:#e9eef7"></div><div class="tab" style="left:100px;width:40px"></div></div>
<div class="addr"><i style="width:60px"></i></div>
<div class="h1" style="top:22px;font-size:7px">User Management System</div>
<div class="sub" style="top:32px;font-size:3px">Create and manage users with our CRUD application</div>
<div class="card" style="left:68px;top:45px;width:80px;height:55px"><div class="ct" style="font-size:3px">Create New User</div><div class="cs" style="font-size:2.3px">Add a new user to the system</div>
<div class="lab" style="top:17px;font-size:2.4px">Name</div><div class="inp" style="top:21px;height:6px;color:#aaa;font-size:2.4px">Enter full name</div>
<div class="lab" style="top:30px;font-size:2.4px">Email</div><div class="inp" style="top:34px;height:6px;color:#aaa;font-size:2.4px">Enter email address</div>
<div class="btn" style="left:5px;top:44px;width:32px;height:6px;font-size:2.1px;border:none">Generate Random User</div><div class="btn dk" style="left:40px;top:44px;width:34px;height:6px;font-size:2.1px">Create User</div></div>
<div class="card" style="left:203px;top:45px;width:127px;height:150px"><div class="ct" style="font-size:3px">Users</div><div class="cs" style="font-size:2.3px">All registered users in the system</div>
<div class="btn" style="left:71px;top:5px;width:15px;height:6px;font-size:2px;border:none">Export CSV</div><div class="btn" style="left:88px;top:5px;width:17px;height:6px;font-size:2px;border:none">Export JSON</div><div class="btn" style="left:107px;top:5px;width:15px;height:6px;font-size:2px;border:none">Refresh</div>
<table style="left:4px;top:19px;width:118px;font-size:2.3px"><tr style="height:6px"><th>Name</th><th>Email</th><th>Created</th><th>Actions</th></tr>
<tr style="height:8px"><td>Geraldine Kunde</td><td>geraldine.k@yahoo.com</td><td class="d">7/4/2025</td><td><span class="ed" style="font-size:3px">✎</span><span class="del" style="width:4.5px;height:5.5px"></span></td></tr>
<tr style="height:8px"><td>Israel Bode</td><td>israel_bode@yahoo.com</td><td class="d">7/4/2025</td><td><span class="ed" style="font-size:3px">✎</span><span class="del" style="width:4.5px;height:5.5px"></span></td></tr>
<tr style="height:8px"><td>Living addict</td><td>coding@addict.com</td><td class="d">7/4/2025</td><td><span class="ed" style="font-size:3px">✎</span><span class="del" style="width:4.5px;height:5.5px"></span></td></tr>
<tr style="height:8px"><td>Nicolas Hagenes III</td><td>Margie28@gmail.com</td><td class="d">7/4/2025</td><td><span class="ed" style="font-size:3px">✎</span><span class="del" style="width:4.5px;height:5.5px"></span></td></tr>
<tr style="height:8px"><td>Olga Schmitt-Davis</td><td>Owen.Greenholt@yahoo.com</td><td class="d">7/4/2025</td><td><span class="ed" style="font-size:3px">✎</span><span class="del" style="width:4.5px;height:5.5px"></span></td></tr>
<tr style="height:8px"><td>Clinton Bauch</td><td>Fred87@hotmail.com</td><td class="d">7/4/2025</td><td><span class="ed" style="font-size:3px">✎</span><span class="del" style="width:4.5px;height:5.5px"></span></td></tr>
<tr style="height:8px"><td>Kim Hoeger</td><td>Ike.Hintz@hotmail.com</td><td class="d">7/4/2025</td><td><span class="ed" style="font-size:3px">✎</span><span class="del" style="width:4.5px;height:5.5px"></span></td></tr>
<tr style="height:8px"><td>Marco Dickens</td><td>Cletus_Padberg@gmail.com</td><td class="d">7/4/2025</td><td><span class="ed" style="font-size:3px">✎</span><span class="del" style="width:4.5px;height:5.5px"></span></td></tr>
<tr style="height:8px"><td>Tara Kuhn-Gibson</td><td>Stacey.Moen@hotmail.com</td><td class="d">7/4/2025</td><td><span class="ed" style="font-size:3px">✎</span><span class="del" style="width:4.5px;height:5.5px"></span></td></tr>
<tr style="height:8px"><td>Kari Keeling</td><td>Harvey_Ernser@hotmail.com</td><td class="d">7/4/2025</td><td><span class="ed" style="font-size:3px">✎</span><span class="del" style="width:4.5px;height:5.5px"></span></td></tr>
<tr style="height:8px"><td>Lucas Huels</td><td>Merritt.Paolucci@gmail.com</td><td class="d">7/4/2025</td><td><span class="ed" style="font-size:3px">✎</span><span class="del" style="width:4.5px;height:5.5px"></span></td></tr>
<tr style="height:8px"><td>Julianne Welch</td><td>Lucinda.Hane@yahoo.com</td><td class="d">7/4/2025</td><td><span class="ed" style="font-size:3px">✎</span><span class="del" style="width:4.5px;height:5.5px"></span></td></tr>
<tr style="height:8px"><td>Billie Brooks</td><td>Brain.Rippin@gmail.com</td><td class="d">7/4/2025</td><td><span class="ed" style="font-size:3px">✎</span><span class="del" style="width:4.5px;height:5.5px"></span></td></tr>
<tr style="height:8px"><td>Garrett Balistreri</td><td>Isaiah_Goodman12@gmail.com</td><td class="d">7/4/2025</td><td><span class="ed" style="font-size:3px">✎</span><span class="del" style="width:4.5px;height:5.5px"></span></td></tr>
<tr style="height:8px"><td>Roxy Rohan</td><td>Rae47@hotmail.com</td><td class="d">7/4/2025</td><td><span class="ed" style="font-size:3px">✎</span><span class="del" style="width:4.5px;height:5.5px"></span></td></tr>
<tr style="height:8px"><td>Lucy Reynolds</td><td>Drew_Stiedemann7@hotmail.com</td><td class="d">7/4/2025</td><td><span class="ed" style="font-size:3px">✎</span><span class="del" style="width:4.5px;height:5.5px"></span></td></tr>
</table></div>
</div>

<div class="c w" style="left:1202px;top:680px">
<div class="tabs"><div class="tab" style="left:20px;width:36px;background:#e9eef7"></div><div class="tab" style="left:58px;width:40px;background:#e9eef7"></div><div class="tab" style="left:100px;width:40px"></div></div>
<div class="addr"><i style="width:60px"></i></div>
<div class="h1" style="top:22px;font-size:7px">User Management System</div>
<div class="sub" style="top:32px;font-size:3px">Create and manage users with our CRUD application</div>
<div class="card" style="left:68px;top:45px;width:80px;height:55px"><div class="ct" style="font-size:3px">Create New User</div><div class="cs" style="font-size:2.3px">Add a new user to the system</div>
<div class="lab" style="top:17px;font-size:2.4px">Name</div><div class="inp" style="top:21px;height:6px;color:#aaa;font-size:2.4px">Enter full name</div>
<div class="lab" style="top:30px;font-size:2.4px">Email</div><div class="inp" style="top:34px;height:6px;color:#aaa;font-size:2.4px">Enter email address</div>
<div class="btn" style="left:5px;top:44px;width:32px;height:6px;font-size:2.1px;border:none">Generate Random User</div><div class="btn dk" style="left:40px;top:44px;width:34px;height:6px;font-size:2.1px">Create User</div></div>
<div class="card" style="left:203px;top:45px;width:127px;height:150px"><div class="ct" style="font-size:3px">Users</div><div class="cs" style="font-size:2.3px">All registered users in the system</div>
<div class="btn" style="left:71px;top:5px;width:15px;height:6px;font-size:2px;border:none">Export CSV</div><div class="btn" style="left:88px;top:5px;width:17px;height:6px;font-size:2px;border:none">Export JSON</div><div class="btn" style="left:107px;top:5px;width:15px;height:6px;font-size:2px;border:none">Refresh</div>
<table style="left:4px;top:19px;width:118px;font-size:2.3px"><tr style="height:6px"><th>Name</th><th>Email</th><th>Created</th><th>Actions</th></tr>
<tr style="height:8px"><td>Geraldine Kunde</td><td>geraldine.k@yahoo.com</td><td class="d">7/4/2025</td><td><span class="ed" style="font-size:3px">✎</span><span class="del" style="width:4.5px;height:5.5px"></span></td></tr>
<tr style="height:8px"><td>Israel Bode</td><td>israel_bode@yahoo.com</td><td class="d">7/4/2025</td><td><span class="ed" style="font-size:3px">✎</span><span class="del" style="width:4.5px;height:5.5px"></span></td></tr>
<tr style="height:8px"><td>Living addict</td><td>coding@addict.com</td><td class="d">7/4/2025</td><td><span class="ed" style="font-size:3px">✎</span><span class="del" style="width:4.5px;height:5.5px"></span></td></tr>
<tr style="height:8px"><td>Nicolas Hagenes III</td><td>Margie28@gmail.com</td><td class="d">7/4/2025</td><td><span class="ed" style="font-size:3px">✎</span><span class="del" style="width:4.5px;height:5.5px"></span></td></tr>
<tr style="height:8px"><td>Olga Schmitt-Davis</td><td>Owen.Greenholt@yahoo.com</td><td class="d">7/4/2025</td><td><span class="ed" style="font-size:3px">✎</span><span class="del" style="width:4.5px;height:5.5px"></span></td></tr>
<tr style="height:8px"><td>Clinton Bauch</td><td>Fred87@hotmail.com</td><td class="d">7/4/2025</td><td><span class="ed" style="font-size:3px">✎</span><span class="del" style="width:4.5px;height:5.5px"></span></td></tr>
<tr style="height:8px"><td>Kim Hoeger</td><td>Ike.Hintz@hotmail.com</td><td class="d">7/4/2025</td><td><span class="ed" style="font-size:3px">✎</span><span class="del" style="width:4.5px;height:5.5px"></span></td></tr>
<tr style="height:8px"><td>Marco Dickens</td><td>Cletus_Padberg@gmail.com</td><td class="d">7/4/2025</td><td><span class="ed" style="font-size:3px">✎</span><span class="del" style="width:4.5px;height:5.5px"></span></td></tr>
<tr style="height:8px"><td>Tara Kuhn-Gibson</td><td>Stacey.Moen@hotmail.com</td><td class="d">7/4/2025</td><td><span class="ed" style="font-size:3px">✎</span><span class="del" style="width:4.5px;height:5.5px"></span></td></tr>
<tr style="height:8px"><td>Kari Keeling</td><td>Harvey_Ernser@hotmail.com</td><td class="d">7/4/2025</td><td><span class="ed" style="font-size:3px">✎</span><span class="del" style="width:4.5px;height:5.5px"></span></td></tr>
<tr style="height:8px"><td>Lucas Huels</td><td>Merritt.Paolucci@gmail.com</td><td class="d">7/4/2025</td><td><span class="ed" style="font-size:3px">✎</span><span class="del" style="width:4.5px;height:5.5px"></span></td></tr>
<tr style="height:8px"><td>Julianne Welch</td><td>Lucinda.Hane@yahoo.com</td><td class="d">7/4/2025</td><td><span class="ed" style="font-size:3px">✎</span><span class="del" style="width:4.5px;height:5.5px"></span></td></tr>
<tr style="height:8px"><td>Billie Brooks</td><td>Brain.Rippin@gmail.com</td><td class="d">7/4/2025</td><td><span class="ed" style="font-size:3px">✎</span><span class="del" style="width:4.5px;height:5.5px"></span></td></tr>
<tr style="height:8px"><td>Garrett Balistreri</td><td>Isaiah_Goodman12@gmail.com</td><td class="d">7/4/2025</td><td><span class="ed" style="font-size:3px">✎</span><span class="del" style="width:4.5px;height:5.5px"></span></td></tr>
<tr style="height:8px"><td>Roxy Rohan</td><td>Rae47@hotmail.com</td><td class="d">7/4/2025</td><td><span class="ed" style="font-size:3px">✎</span><span class="del" style="width:4.5px;height:5.5px"></span></td></tr>
<tr style="height:8px"><td>Lucy Reynolds</td><td>Drew_Stiedemann7@hotmail.com</td><td class="d">7/4/2025</td><td><span class="ed" style="font-size:3px">✎</span><span class="del" style="width:4.5px;height:5.5px"></span></td></tr>
</table></div>
</div>

</body></html>
